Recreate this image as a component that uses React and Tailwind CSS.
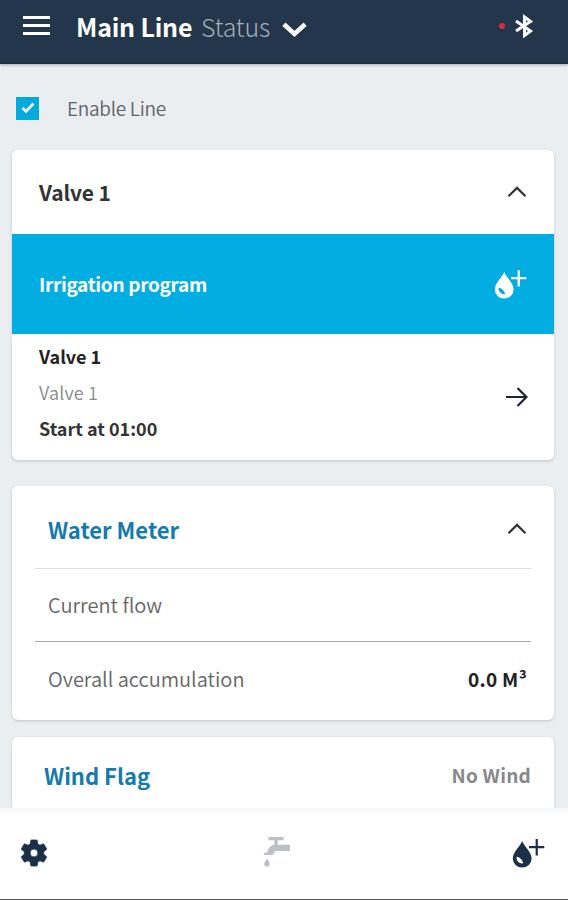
import { useState } from 'react';
import clsx from 'clsx';

function Chevron({ up = true, className, strokeWidth = 2.2 }) {
  return (
    <svg viewBox="0 0 20 12" className={className} fill="none" stroke="currentColor" strokeWidth={strokeWidth}>
      <path d={up ? 'M1.5 10.2 10 1.9l8.5 8.3' : 'M1.5 1.8 10 9.5l8.5-7.7'} />
    </svg>
  );
}

function DropPlus({ className }) {
  return (
    <svg viewBox="0 0 34 32" className={className} fill="none">
      <path
        d="M10.5 3C8.5 8.500.8 14.500.8 21.100a9.700 9.400 0 0 0 19.400 0C20.200 14.500 12.500 8.500 10.500 3ZM4.800 19.500c1.800-.4 6.600 3.400 6.600 6.600-3.600.8-7.400-3-6.600-6.600Z"
        fill="currentColor"
        fillRule="evenodd"
      />
      <path d="M25.500 1v17M17.500 9.500h15.800" stroke="currentColor" strokeWidth="2.300" />
    </svg>
  );
}

function Tap({ className }) {
  return (
    <svg viewBox="0 0 28 31" className={className} fill="currentColor">
      <path d="M5.500 1h15v3.200h-5.800v4.600H27v6.200H12.200L9.500 19H.5l1-2.500h2.800C5 12 7.500 9.500 11.400 8.800V4.200H5.500Z" />
      <path d="M4 22.200c.6 2 2.700 3.600 2.700 5.500a2.700 2.900 0 0 1-5.400 0c0-1.900 2.100-3.500 2.700-5.500Z" />
    </svg>
  );
}

function Gear({ className }) {
  return (
    <svg viewBox="2 2 20 20" className={className} fill="currentColor" stroke="currentColor" strokeWidth="0.6">
      <path d="M19.430 12.980c.040-.320.070-.640.070-.980s-.030-.660-.070-.980l2.110-1.650c.190-.150.240-.420.120-.640l-2-3.460c-.120-.220-.390-.300-.610-.220l-2.490 1c-.520-.400-1.080-.730-1.690-.980l-.380-2.650C14.460 2.180 14.250 2 14 2h-4c-.250 0-.460.180-.490.420l-.380 2.650c-.610.250-1.170.590-1.690.980l-2.490-1c-.230-.090-.490 0-.610.220l-2 3.460c-.130.220-.070.490.120.640l2.110 1.650c-.040.320-.070.650-.070.980s.030.660.070.980l-2.110 1.650c-.190.150-.240.420-.120.640l2 3.460c.120.220.390.300.610.220l2.490-1c.520.400 1.080.730 1.690.980l.380 2.650c.030.240.240.420.490.420h4c.250 0 .460-.180.490-.420l.380-2.650c.610-.250 1.170-.590 1.690-.980l2.490 1c.230.090.490 0 .610-.220l2-3.460c.120-.220.070-.490-.120-.640l-2.110-1.650ZM12 15a3 3 0 1 1 0-6 3 3 0 0 1 0 6Z" />
    </svg>
  );
}

function Card({ className, children }) {
  return (
    <section className={clsx('shrink-0 overflow-hidden rounded-md bg-white shadow-[0_1px_3px_rgba(0,0,0,0.18)]', className)}>
      {children}
    </section>
  );
}

export default function App() {
  const [enabled, setEnabled] = useState(true);

  return (
    <div className="flex h-[900px] w-[568px] flex-col overflow-hidden bg-[#ebeef1] font-['Noto_Sans_CJK_SC',sans-serif] whitespace-nowrap">
      <header className="z-10 flex h-16 shrink-0 items-center border-b-2 border-[#1b3049] bg-[#24364b] pr-[34px] pb-[11px] pl-[23px] text-white shadow-[0_1px_3px_rgba(0,0,0,0.3)]">
        <button className="flex w-[27px] flex-col gap-[5px]">
          <span className="h-[3px] bg-white" />
          <span className="h-[3px] bg-white" />
          <span className="h-[3px] bg-white" />
        </button>
        <h1 className="ml-[26px] w-[116px] text-[25px] leading-8 font-bold tracking-[-0.2px]">Main Line</h1>
        <span className="ml-[9px] w-[69px] text-[25px] leading-8 font-light tracking-[-0.2px] text-[#a5afba]">Status</span>
        <Chevron up={false} strokeWidth={3.6} className="mt-2 ml-3 h-[15px] w-[25px]" />
        <div className="ml-auto flex items-center gap-[9px]">
          <span className="size-[6px] rounded-full bg-[#e0283c]" />
          <svg viewBox="0 0 20 24" className="h-6 w-5" fill="none" stroke="currentColor" strokeWidth="3">
            <path d="M2 7 16.500 17 10.500 21.500V3l6 4.500L2 17" />
          </svg>
        </div>
      </header>

      <main className="flex min-h-0 flex-1 flex-col overflow-hidden pr-[14px] pl-3">
        <label className="mt-[26px] ml-1 flex h-9 shrink-0 items-center">
          <input type="checkbox" className="sr-only" checked={enabled} onChange={(e) => setEnabled(e.target.checked)} />
          <span className="flex size-[23px] items-center justify-center bg-[#05aadd] text-white">
            {enabled && (
              <svg viewBox="0 0 14 12" className="h-3 w-[14px]" fill="none" stroke="currentColor" strokeWidth="2.600">
                <path d="M1.500 6 5 9.300 12.500 1.500" />
              </svg>
            )}
          </span>
          <span className="ml-7 text-[19px] leading-7 font-[350] tracking-[-0.3px] text-[#606468]">Enable Line</span>
        </label>

        <Card className="mt-6 h-[310px]">
          <div className="flex h-[84px] items-center justify-between pr-[27px] pl-[27px]">
            <h2 className="pb-px text-[21px] leading-7 font-bold tracking-[-0.1px] text-[#333]">Valve 1</h2>
            <Chevron className="h-[12px] w-5 text-[#333]" />
          </div>
          <div className="flex h-[100px] items-center justify-between bg-[#02aee1] pr-[27px] pl-[27px] text-white">
            <h3 className="text-[19px] leading-7 font-bold tracking-[-0.3px]">Irrigation program</h3>
            <DropPlus className="h-[31px] w-[33px]" />
          </div>
          <div className="flex h-[126px] items-center justify-between pr-[26px] pl-[27px]">
            <div className="pb-[11px] text-[18px] leading-9">
              <p className="font-bold text-[#222]">Valve 1</p>
              <p className="font-[350] tracking-[0.2px] text-[#888]">Valve 1</p>
              <p className="font-bold text-[#333]">Start at 01:00</p>
            </div>
            <svg viewBox="0 0 22 20" className="h-5 w-[22px] text-[#1b2340]" fill="none" stroke="currentColor" strokeWidth="2.200">
              <path d="M0 10h20M11.500 1l9 9-9 9" />
            </svg>
          </div>
        </Card>

        <Card className="mt-[26px] h-[234px] pr-[23px] pl-[23px]">
          <div className="flex h-[83px] items-center justify-between border-b border-[#ddd] pt-1 pr-1 pl-[13px]">
            <h2 className="pb-px text-[22px] leading-8 font-bold text-[#147bad]">Water Meter</h2>
            <Chevron className="h-[12px] w-5 text-[#333]" />
          </div>
          <div className="flex h-[73px] items-center border-b border-[#aaa] pl-[13px]">
            <span className="text-[20px] leading-7 font-[350] text-[#666]">Current flow</span>
          </div>
          <div className="flex h-[74px] items-center justify-between pr-1 pl-[13px]">
            <span className="text-[20px] leading-7 font-[350] text-[#666]">Overall accumulation</span>
            <span className="text-[19px] leading-7 font-bold tracking-[0.3px] text-[#222]">0.0 M³</span>
          </div>
        </Card>

        <Card className="mt-[17px] h-[78px] rounded-b-none">
          <div className="flex h-[76px] items-center justify-between pr-[23px] pl-8">
            <h2 className="text-[22px] leading-8 font-bold text-[#147bad]">Wind Flag</h2>
            <span className="text-[19px] leading-7 font-bold tracking-[0.2px] text-[#888]">No Wind</span>
          </div>
        </Card>
      </main>

      <footer className="z-10 flex h-[92px] shrink-0 items-center justify-between border-t-4 border-b border-t-[#f7f8f9] border-b-[#555] bg-white pr-[23px] pb-[5px] pl-[21px] text-[#1b3048]">
        <Gear className="h-[26px] w-[26px] overflow-visible" />
        <Tap className="mr-[5px] mb-1 h-[31px] w-7 text-[#bcc0c5]" />
        <DropPlus className="h-[31px] w-[33px]" />
      </footer>
    </div>
  );
}
